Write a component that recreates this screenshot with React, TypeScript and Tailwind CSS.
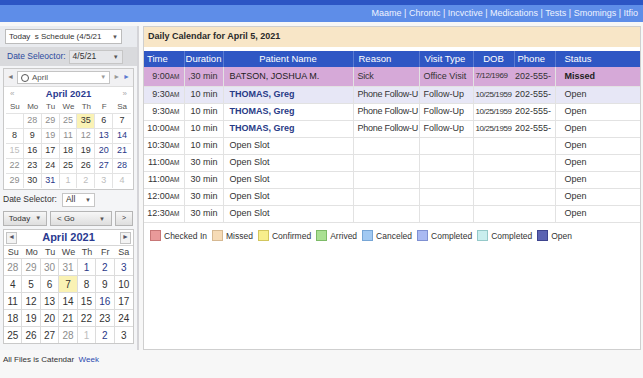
import React from "react";

type Day = [string, string];

const cal1: Day[][] = [
  [["", ""], ["28", "g"], ["29", "g"], ["25", "g"], ["35", "h"], ["6", "d"], ["7", "d"]],
  [["8", "d"], ["9", "d"], ["19", "g"], ["11", "g"], ["12", "g"], ["13", "n"], ["14", "n"]],
  [["15", "l"], ["16", "d"], ["17", "d"], ["18", "d"], ["19", "d"], ["20", "n"], ["21", "n"]],
  [["22", "g"], ["23", "d"], ["24", "d"], ["25", "d"], ["26", "d"], ["27", "n"], ["28", "n"]],
  [["29", "g"], ["30", "d"], ["31", "n"], ["1", "l"], ["2", "l"], ["3", "l"], ["4", "l"]],
];

const cal2: Day[][] = [
  [["28", "g"], ["29", "g"], ["30", "g"], ["31", "g"], ["1", "n"], ["2", "n"], ["3", "n"]],
  [["4", "d"], ["5", "d"], ["6", "d"], ["7", "h"], ["8", "d"], ["9", "d"], ["10", "d"]],
  [["11", "d"], ["12", "d"], ["13", "d"], ["14", "d"], ["15", "d"], ["16", "n"], ["17", "d"]],
  [["18", "d"], ["19", "d"], ["20", "d"], ["21", "d"], ["22", "d"], ["23", "d"], ["24", "d"]],
  [["25", "d"], ["26", "d"], ["27", "d"], ["28", "g"], ["1", "l"], ["2", "n"], ["3", "d"]],
];

const dayColor: Record<string, string> = {
  g: "text-[#8c8c8c]",
  d: "text-[#333]",
  n: "text-[#2a3888]",
  l: "text-[#bdbdbd]",
  h: "text-[#333] bg-[#faf2b4]",
};

type Row = {
  t: string;
  d: string;
  name: string;
  reason?: string;
  vt?: string;
  dob?: string;
  ph?: string;
  st: string;
  kind?: "missed" | "alt";
};

const rows: Row[] = [
  { t: "9:00", d: ",30 min", name: "BATSON, JOSHUA M.", reason: "Sick", vt: "Office Visit", dob: "7/12/1969", ph: "202-555-", st: "Missed", kind: "missed" },
  { t: "9:30", d: "10 min", name: "THOMAS, Greg", reason: "Phone Follow-U", vt: "Follow-Up", dob: "10/25/1959", ph: "202-555-", st: "Open", kind: "alt" },
  { t: "9:30", d: "10 min", name: "THOMAS, Greg", reason: "Phone Follow-U", vt: "Follow-Up", dob: "10/25/1959", ph: "202-555-", st: "Open" },
  { t: "10:00", d: "10 min", name: "THOMAS, Greg", reason: "Phone Follow-U", vt: "Follow-Up", dob: "10/25/1959", ph: "202-555-", st: "Open" },
  { t: "10:30", d: "10 min", name: "Open Slot", st: "Open" },
  { t: "11:00", d: "30 min", name: "Open Slot", st: "Open" },
  { t: "11:00", d: "30 min", name: "Open Slot", st: "Open" },
  { t: "12:00", d: "30 min", name: "Open Slot", st: "Open" },
  { t: "12:30", d: "30 min", name: "Open Slot", st: "Open" },
];

const legend = [
  { label: "Checked In", c: "bg-[#e99a9a] border-[#c77676]" },
  { label: "Missed", c: "bg-[#f6dbb6] border-[#d6b992]" },
  { label: "Confirmed", c: "bg-[#f7ee8c] border-[#d2c65e]" },
  { label: "Arrived", c: "bg-[#a9e093] border-[#7dbb68]" },
  { label: "Canceled", c: "bg-[#a1c9f2] border-[#77a6d6]" },
  { label: "Completed", c: "bg-[#a9b9f2] border-[#7f90d2]" },
  { label: "Completed", c: "bg-[#c9eeee] border-[#95c9c9]" },
  { label: "Open", c: "bg-[#5b63b2] border-[#3d448e]" },
];

function Caret() {
  return <span className="text-[6px] text-[#555]">▼</span>;
}

function SmallCalendar() {
  return (
    <div className="mx-[3px] mt-[2px] border border-[#c9c9c9] bg-white">
      <div className="h-[18px] flex items-center gap-[3px] px-[3px] bg-[#f1f1f3] border-b border-[#dedede]">
        <span className="text-[7px] text-[#777]">◄</span>
        <div className="flex-1 h-[13px] border border-[#c4c4c4] bg-white flex items-center px-[3px] gap-[3px]">
          <span className="w-[8px] h-[8px] rounded-full border border-[#555]" />
          <span className="text-[8px] text-[#555]">April</span>
          <span className="ml-auto text-[6px] text-[#999]">▼</span>
        </div>
        <span className="text-[7px] text-[#999]">►</span>
        <span className="text-[7px] text-[#5b7bd0]">►</span>
      </div>
      <div className="h-[14px] flex items-center justify-between px-[6px]">
        <span className="text-[8px] text-[#aaa]">«</span>
        <span className="text-[9.5px] font-bold text-[#2a3a90]">April 2021</span>
        <span className="text-[8px] text-[#aaa]">»</span>
      </div>
      <div className="grid grid-cols-7 h-[12px] items-center px-[2px] text-[8px] text-[#555] text-center">
        {["Su", "Mo", "Tu", "We", "Th", "F", "Sa"].map((d) => (
          <span key={d}>{d}</span>
        ))}
      </div>
      <div className="px-[2px] pb-[1px]">
        {cal1.map((r, i) => (
          <div key={i} className="grid grid-cols-7 border-t border-[#e3e3e3]">
            {r.map(([n, k], j) => (
              <div
                key={j}
                className={`h-[14px] flex items-center justify-center text-[9px] border-r border-[#e3e3e3] last:border-r-0 ${dayColor[k] ?? ""}`}
              >
                {n}
              </div>
            ))}
          </div>
        ))}
      </div>
    </div>
  );
}

function MonthCalendar() {
  return (
    <div className="mx-[3px] mt-[1px] border border-[#c9c9c9] bg-white">
      <div className="h-[16px] flex items-center justify-between px-[2px] border-b border-[#d6d6d6]">
        <span className="w-[11px] h-[12px] border border-[#c4c4c4] bg-[#f3f3f3] flex items-center justify-center text-[7px] text-[#556]">◄</span>
        <span className="text-[11px] font-bold text-[#2a3a90]">April 2021</span>
        <span className="w-[11px] h-[12px] border border-[#c4c4c4] bg-[#f3f3f3] flex items-center justify-center text-[7px] text-[#556]">►</span>
      </div>
      <div className="grid grid-cols-7 h-[12px] items-center text-[9px] text-[#444] text-center">
        {["Su", "Mo", "Tu", "We", "Th", "Fr", "Sa"].map((d) => (
          <span key={d}>{d}</span>
        ))}
      </div>
      <div>
        {cal2.map((r, i) => (
          <div key={i} className="grid grid-cols-7 border-t border-[#dcdcdc]">
            {r.map(([n, k], j) => (
              <div
                key={j}
                className={`h-[16px] flex items-center justify-center text-[10px] border-r border-[#dcdcdc] last:border-r-0 ${dayColor[k]}`}
              >
                {n}
              </div>
            ))}
          </div>
        ))}
      </div>
    </div>
  );
}

function Sidebar() {
  return (
    <div className="w-[139px] shrink-0">
      <div className="h-[324px] border-r-2 border-[#d4d4d8] bg-[#f4f5f7]">
        <div className="bg-[#e9ebef] py-[3px] px-[5px]">
          <div className="w-[117px] h-[15px] bg-white border border-[#bcbcbc] flex items-center px-[3px] text-[8px] text-[#333]">
            <span>Today&nbsp;&nbsp;s Schedule (4/5/21</span>
            <span className="ml-auto">
              <Caret />
            </span>
          </div>
        </div>
        <div className="h-[19px] bg-[#d9dadd] flex items-center px-[7px] gap-[3px] text-[8.5px]">
          <span className="text-[#2c4a9e]">Date Seleoctor:</span>
          <div className="w-[54px] h-[14px] bg-[#e6e7ea] border border-[#c6c6c6] flex items-center px-[3px] text-[#333]">
            <span>4/5/21</span>
            <span className="ml-auto">
              <Caret />
            </span>
          </div>
        </div>
        <SmallCalendar />
        <div className="h-[19px] flex items-center gap-[5px] px-[3px] text-[8.5px] text-[#333]">
          <span>Date Selector:</span>
          <div className="w-[33px] h-[14px] bg-white border border-[#c6c6c6] flex items-center px-[3px]">
            <span>All</span>
            <span className="ml-auto">
              <Caret />
            </span>
          </div>
        </div>
        <div className="h-[19px] flex items-center gap-[3px] px-[3px] text-[8px] text-[#333]">
          <div className="w-[44px] h-[15px] border border-[#b5b5b5] bg-gradient-to-b from-[#f7f7f7] to-[#dedede] flex items-center justify-center gap-[5px]">
            <span>Today</span>
            <Caret />
          </div>
          <div className="w-[62px] h-[15px] border border-[#b5b5b5] bg-gradient-to-b from-[#f7f7f7] to-[#dedede] flex items-center px-[6px]">
            <span>&lt; Go</span>
            <span className="ml-auto">
              <Caret />
            </span>
          </div>
          <div className="w-[18px] h-[15px] border border-[#b5b5b5] bg-gradient-to-b from-[#f7f7f7] to-[#dedede] flex items-center justify-center text-[7px]">
            &gt;
          </div>
        </div>
        <MonthCalendar />
      </div>
      <div className="pt-[4px] px-[3px] text-[8px] text-[#333]">
        All Files is Catendar&nbsp;&nbsp;<span className="text-[#2a49b0]">Week</span>
      </div>
    </div>
  );
}

function Main() {
  const cell = "border-b border-[#e2e2e2] whitespace-nowrap overflow-hidden";
  return (
    <div className="w-[498px] h-[324px] border border-[#cfcfcf] bg-white">
      <div className="h-[20px] bg-[#f8e6c7] flex items-center px-[4px] text-[9px] font-bold text-[#2a2a2a]">
        Daily Calendar for April 5, 2021
      </div>
      <table className="mt-[4px] w-full table-fixed border-collapse">
        <colgroup>
          <col className="w-[40px]" />
          <col className="w-[39px]" />
          <col className="w-[130px]" />
          <col className="w-[66px]" />
          <col className="w-[54px]" />
          <col className="w-[41px]" />
          <col className="w-[41px]" />
          <col />
        </colgroup>
        <thead>
          <tr className="h-[16px] bg-[#2f57c4] text-white text-[9.5px]">
            <th className="font-normal text-left pl-[3px] border-r border-[#5a7bd2]">Time</th>
            <th className="font-normal text-center border-r border-[#5a7bd2]">Duration</th>
            <th className="font-normal text-center border-r border-[#5a7bd2]">Patient Name</th>
            <th className="font-normal text-left pl-[5px] border-r border-[#5a7bd2]">Reason</th>
            <th className="font-normal text-left pl-[5px] border-r border-[#5a7bd2]">Visit Type</th>
            <th className="font-normal text-center border-r border-[#5a7bd2]">DOB</th>
            <th className="font-normal text-left pl-[3px] border-r border-[#5a7bd2]">Phone</th>
            <th className="font-normal text-left pl-[9px]">Status</th>
          </tr>
        </thead>
        <tbody>
          {rows.map((r, i) => {
            const bg =
              r.kind === "missed"
                ? "bg-[#d6a9d8]"
                : r.kind === "alt"
                ? "bg-[#e7e7f6]"
                : "bg-white";
            const h = r.kind === "missed" ? "h-[19px]" : "h-[17px]";
            const nameCls = r.name === "Open Slot" ? "text-[#333]" : r.kind === "missed" ? "text-[#222]" : "text-[#283a86] font-bold";
            return (
              <tr key={i} className={`${bg} ${h} text-[#333]`}>
                <td className={`${cell} text-[9px] text-right pr-[4px] border-r border-[#dcdcdc]`}>
                  {r.t}
                  <span className="text-[6.5px]">AM</span>
                </td>
                <td className={`${cell} text-[9px] text-right pr-[5px] border-r border-[#dcdcdc]`}>{r.d}</td>
                <td className={`${cell} text-[9px] pl-[6px] border-r border-[#dcdcdc] ${nameCls}`}>{r.name}</td>
                <td className={`${cell} text-[9px] pl-[4px] tracking-[-0.25px] border-r border-[#dcdcdc]`}>{r.reason ?? ""}</td>
                <td className={`${cell} text-[9px] pl-[4px] border-r border-[#dcdcdc]`}>{r.vt ?? ""}</td>
                <td className={`${cell} text-[8px] pl-[2px] tracking-[-0.4px]`}>{r.dob ?? ""}</td>
                <td className={`${cell} text-[9px] pl-[1px] border-r border-[#dcdcdc]`}>{r.ph ?? ""}</td>
                <td className={`${cell} text-[9px] pl-[9px] ${r.kind === "missed" ? "font-bold text-[#222]" : ""}`}>{r.st}</td>
              </tr>
            );
          })}
        </tbody>
      </table>
      <div className="mt-[7px] flex items-center gap-[5px] px-[6px] text-[8.5px] text-[#333]">
        {legend.map((l, i) => (
          <div key={i} className="flex items-center gap-[3px]">
            <span className={`w-[11px] h-[11px] border ${l.c}`} />
            <span>{l.label}</span>
          </div>
        ))}
      </div>
    </div>
  );
}

export default function App() {
  return (
    <div className="w-[643px] h-[378px] overflow-hidden bg-[#f7f7f7] font-['Liberation_Sans',Arial,sans-serif] text-[#333]">
      <div className="h-[5px] bg-[#2c55c4]" />
      <div className="h-[17px] bg-[#5e8de8] flex items-center justify-end pr-[5px] text-[9px] text-[#eef3ff]">
        Maame | Chrontc | Incvctive | Medications | Tests | Smomings | Itfio
      </div>
      <div className="flex gap-[4px] pt-[4px]">
        <Sidebar />
        <Main />
      </div>
    </div>
  );
}
